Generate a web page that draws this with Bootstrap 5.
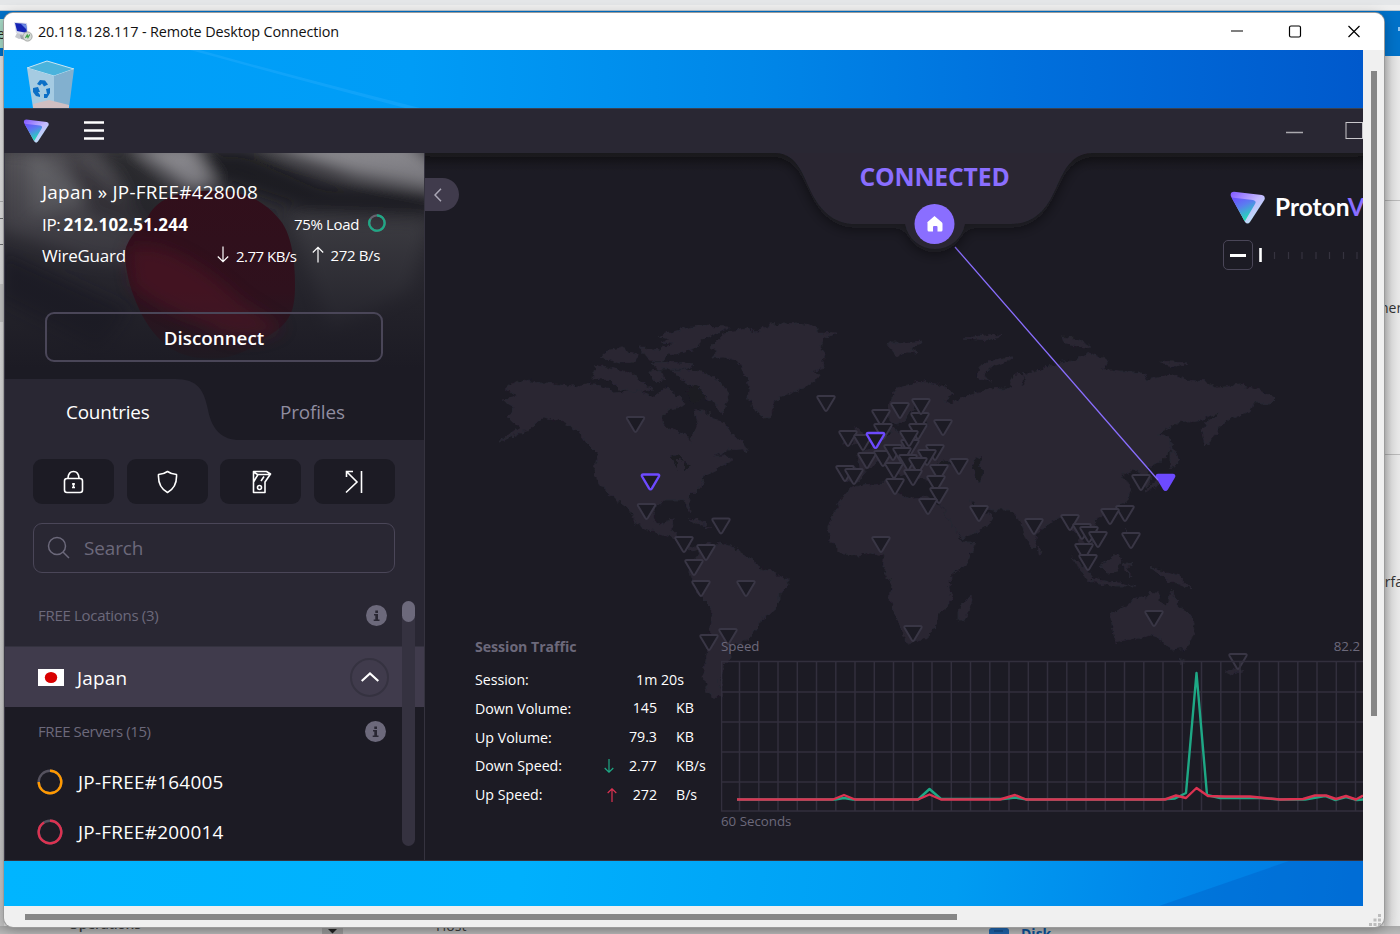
<!DOCTYPE html>
<html lang="en">
<head>
<meta charset="utf-8">
<title>Remote Desktop Connection</title>
<link href="https://cdn.jsdelivr.net/npm/bootstrap@5.3.0/dist/css/bootstrap.min.css" rel="stylesheet">
<style>
:root{--panel:#292733;--deep:#1c1b24;--edge:#35333f;--mute:#6c697b;--violet:#8a6eff}
body{width:1400px;height:934px;overflow:hidden;font-family:"Open Sans","Noto Sans",sans-serif;line-height:1;background:#dcdcdc}
.t{white-space:nowrap;display:block}
svg{display:block}
/* page behind the window */
.back{width:1400px;height:934px}
.strip{height:11px;background:linear-gradient(#e4e6e8 0 5px,#efefef 5px 10px,#b9c4cc 10px)}
.azure{height:45px;background:#0072c9}
.azure .chip{width:5px;height:29px;margin-top:8px;background:#a9dcc8;font-size:14px;color:#222}
.azure .chip .t{margin-left:-3px}
.side-l{width:4px;background:linear-gradient(#e6e6e6,#d9d9d9 50%,#c4c4c4)}
.side-r{width:16px;background:linear-gradient(90deg,#c4c4c4,#e0e0e0 50%,#e9e9e9);font-size:14px;color:#333}
.foot{height:8px;background:linear-gradient(#a9a9a9,#b9b9b9);overflow:hidden;font-size:14px;color:#3c3c3c}
/* remote desktop window */
.win{left:4px;top:13px;width:1380px;height:914px;border-radius:9px;background:#f0f0f0;box-shadow:0 0 0 1px #9b9b9b,0 3px 14px rgba(0,0,0,.3)}
.bar{height:37px;background:#fff}
.bar .t{font-size:14.4px;letter-spacing:-.11px;color:#111;padding-top:1px}
.desk{width:1359px;height:856px;overflow:hidden;background:linear-gradient(90deg,#00a2fb 0,#009cf6 30%,#0087e8 55%,#006fdc 76%,#0059cc 100%)}
.desk-top{height:58px}
.desk-bot{height:45px;background:linear-gradient(97deg,#00b5ff 0,#00b0fd 38%,#009cf2 70%,#0088ea 84%,#0078e0 100%)}
.vbar{width:21px;padding:21px 0 0 8px}.vbar i{display:block;width:6px;height:645px;background:#868686}
.hbar{height:21px;padding:8px 0 0 21px}.hbar i{display:block;width:932px;height:6px;background:#868686}
/* vpn application */
.app{height:753px;background:var(--deep);color:#fff;border-top:1px solid #3a4252;border-bottom:1px solid #34323f}
.app-head{height:44px;background:var(--panel)}
.aside{width:421px;border-right:1px solid var(--edge);background:var(--panel);border-left:1px solid #3a3846}
.hero{height:226px;overflow:hidden}
.hero-in{padding:30px 42px 0 37px}
.f20{font-size:18.9px}.f18{font-size:17px}.f16{font-size:15px}
.srv{letter-spacing:.26px}
.btn-x{height:50px;margin-left:3px;width:338px;border:2px solid #4a4658;border-radius:9px;color:#fff;background:transparent;font-size:18.8px;font-weight:600;padding:3px 0 0}
.tabs{height:61px}
.tool{width:81px;height:45px;border-radius:9px;background:var(--deep)}
.find{height:50px;border:1px solid #4a4658;border-radius:9px;margin:19px 29px 0 28px;padding-left:13px;color:var(--mute)}
.loc{height:60px;background:#403b4c}
.inf{width:21px;height:21px;border-radius:50%;background:#6c697b}
.up{width:39px;height:39px;border-radius:50%;border:2px solid #353240}
.track{right:9px;top:448px;width:13px;height:245px;border-radius:7px;background:#353240}
.track i{display:block;height:21px;border-radius:7px;background:#6c697b}
.stage{width:938px}
.fold{left:0;top:25px;width:34px;height:33px;border-radius:0 17px 17px 0;background:#403b4c}
.status{left:434px;top:12px;width:151px;font-size:24.7px;font-weight:700;color:var(--violet);letter-spacing:-.15px}
.brand{left:805px;top:38px}
.brand .t{font-family:"Lato",sans-serif;font-weight:700;font-size:24.5px;letter-spacing:0}
.zoomer{left:798px;top:87px}
.zoomer b{width:30px;height:30px;border:1px solid #4a4658;border-radius:5px}
.stats{left:50px;top:484px;width:240px;font-size:14.2px}
.stats .r{height:28.8px}
.chart{left:296px;top:487px;width:642px;font-size:13.3px;color:var(--mute)}
</style>
</head>
<body>
<div class="back d-flex flex-column">
  <div class="strip"></div>
  <div class="azure d-flex justify-content-between"><div class="chip d-flex align-items-center"><span class="t">e</span></div><svg width="2" height="45"><path d="M0 16h2v4H0z" fill="#8fc3ee"/></svg></div>
  <div class="flex-grow-1 d-flex justify-content-between">
    <div class="side-l d-flex flex-column">
      <hr class="m-0" style="margin-top:145px!important"><hr class="m-0" style="margin-top:16px!important;opacity:.6"><hr class="m-0" style="margin-top:25px!important;opacity:.6">
      <svg width="4" height="77"><path d="M0 39h4v38H0z" fill="#c6c6c6"/></svg>
    </div>
    <div class="side-r">
      <hr class="m-0" style="margin-top:144px!important">
      <span class="t" style="margin:100px 0 0 -4px">ner</span>
      <hr class="m-0" style="margin-top:139px!important">
      <span class="t" style="margin:120px 0 0 -7px">erfa</span>
    </div>
  </div>
  <div class="foot d-flex">
    <span class="t fw-semibold" style="margin:-9px 0 0 68px;width:368px;letter-spacing:-.3px">Operations</span>
    <span class="t" style="margin:-7px 0 0;width:553px">Host</span>
    <svg width="20" height="8"><path d="M0 4Q0 1 10 1T20 4V8H0z" fill="#1f62a8"/><path d="M5 5h9" stroke="#0c3d74"/></svg>
    <span class="t fw-bold" style="margin:1px 0 0 12px;color:#0a4f96">Disk</span>
  </div>
</div>
<svg class="position-absolute" style="left:322px;top:927px" width="21" height="7"><path d="M0 0h21v7H0z" fill="#999"/><path d="M6 2h9l-4.500 4.500z" fill="#222"/></svg>

<main class="win position-absolute overflow-hidden">
  <header class="bar d-flex align-items-center">
    <svg class="ms-2" width="22" height="22" viewBox="0 0 22 22"><path d="M2 1l13 1 1 12-12-2z" fill="#d7dcec"/><path d="M3 2l11 1 1 9-10-2z" fill="#1524b4"/><path d="M9 3l5 .3L15 9z" fill="#6d8be4"/><path d="M5 12l5 1 4 3-7 2-4-2z" fill="#c5c8ce"/><path d="M8 14l4 1 1 4-4-1z" fill="#9ea2ab"/><circle cx="15.500" cy="15.500" r="4.600" fill="#d6d9d6" stroke="#a5a8a5"/><path d="M13.500 17l1.700-3 .8 2.500 1.700-3" stroke="#3fa34b" fill="none" stroke-width="1.200"/></svg>
    <span class="t" style="margin-left:4px">20.118.128.117 - Remote Desktop Connection</span>
    <svg class="ms-auto" style="margin-right:23px" width="130" height="14" viewBox="0 0 130 14" fill="none" stroke="#000" stroke-width="1.200"><path d="M0 6h12M117.500 1l11 11M128.500 1l-11 11"/><rect x="58.500" y="1" width="11" height="11" rx="1.500"/></svg>
  </header>
  <div class="d-flex">
    <div class="desk d-flex flex-column">
      <div class="desk-top">
        <svg width="1359" height="58" viewBox="4 50 1359 58"><path d="M200 50Q300 78 420 108H405Q300 80 190 50z" fill="#34b4ff" opacity=".3"/>
          <path d="M27 68l20-7 27 8-20 7z" fill="#4ab3dc" stroke="#c9e6f3"/><path d="M27 68l27 8v32H33z" fill="#a5cbe2"/><path d="M54 76l20-7-5 39H54z" fill="#82b0cf"/><path d="M33 104l16-4 20 5v3H33z" fill="#d0bfc2"/>
          <g fill="#0c6fc6"><path d="M37 84l3-4 5 .5 3 4-4 2-2-3-2 2zM46 89l4-1 0 5-3 5-3 0 0-4 3 0zM33 88l5-1 2 5-2 0 2 3 0 2-4-1-3-4z"/></g></svg>
      </div>
      <section class="app">
        <div class="app-head d-flex align-items-center">
          <svg style="margin-left:19px" width="27" height="24" viewBox="0 0 36 33"><use href="#logo"/></svg>
          <svg style="margin:-2px 0 0 34px" width="20" height="19" viewBox="0 0 20 19"><path d="M0 1.500h20M0 9.500h20M0 17.500h20" stroke="#fff" stroke-width="2.400"/></svg>
          <svg class="ms-auto" width="78" height="18" viewBox="1285 122 78 18"><path d="M1286 132.500h17" stroke="#aaa9ae" stroke-width="1.500"/><rect x="1346" y="122.500" width="16.500" height="16" fill="none" stroke="#c9c8cc"/></svg>
        </div>
        <div class="d-flex" style="height:707px">
          <aside class="aside position-relative overflow-hidden">
            <div class="hero position-relative">
              <svg class="position-absolute top-0 start-0" width="419" height="226" viewBox="5 153 419 226">
                <defs><linearGradient id="hg" x1="0" y1="0" x2="0" y2="1"><stop offset="0" stop-color="#1c1b24" stop-opacity="0"/><stop offset=".45" stop-color="#1c1b24" stop-opacity=".5"/><stop offset=".95" stop-color="#1c1b24"/></linearGradient>
                <linearGradient id="rd" x1="0" y1="0" x2="0" y2="1"><stop offset="0" stop-color="#310f1b"/><stop offset=".6" stop-color="#2f111d"/><stop offset="1" stop-color="#1f1a22"/></linearGradient>
                <filter id="b1" x="-30%" y="-50%" width="160%" height="200%"><feGaussianBlur stdDeviation="8"/></filter></defs>
                <path d="M5 153h419v226H5z" fill="#36353a"/>
                <g filter="url(#b1)"><path d="M0 150h90l60 60 10 60-70-10-90-30z" fill="#545358"/><path d="M30 150l60 50-60 20z" fill="#68676c"/><path d="M60 140l60 56 60 30-10 20-80-30z" fill="#3a393e"/><path d="M100 150h30l40 40 10 80-40-50z" fill="#2a292e"/><path d="M130 145h60l40 36-40 10z" fill="#8a898e"/><path d="M195 150l50 0 80 34 110 6v26l-130-4-90-30z" fill="#1d1c21"/><path d="M255 140h150l40 30v22l-90-16-60-20z" fill="#88878c"/><path d="M290 216l140 5-20 70-80 40z" fill="#4c4b50"/><path d="M0 250l130 60-30 40L0 300z" fill="#1f1e25"/></g>
                <path d="M5 153h419v226H5z" fill="url(#hg)"/>
                <path d="M150 213C165 190 200 190 222 191C250 192 268 205 280 220C290 232 295 255 295 285C295 310 291 322 270 335C250 350 230 362 200 358C160 355 140 318 130 285C124 262 124 250 127 245C132 232 144 225 150 213z" fill="url(#rd)"/>
                <path d="M128 248Q170 235 240 300L284 328Q240 350 205 325Q160 310 132 285z" fill="#551528" opacity=".5" filter="url(#b1)"/></svg>
              <div class="hero-in position-relative">
                <span class="t f20 srv">Japan » JP-FREE#428008</span>
                <div class="d-flex align-items-center" style="margin-top:14px;height:17px"><span class="t f18" style="letter-spacing:-.3px">IP:</span><span class="t f18 fw-bold" style="margin-left:3px;letter-spacing:.22px">212.102.51.244</span><span class="t f16 ms-auto" style="letter-spacing:-.35px">75% Load</span>
                  <svg style="margin:-2px -4px 0 9px" width="18" height="18" viewBox="0 0 18 18" fill="none" stroke-width="2.200"><circle cx="9" cy="9" r="7.700" stroke="#66636f"/><path d="M9 1.300A7.700 7.700 0 1 1 2.300 5" stroke="#1ea885"/></svg></div>
                <div class="d-flex align-items-center" style="margin-top:14px;height:18px"><span class="t f18" style="letter-spacing:-.25px">WireGuard</span>
                  <svg class="ms-auto" style="margin-top:-2px" width="12" height="17" viewBox="0 0 12 17" fill="none" stroke="#fff" stroke-width="1.200"><path d="M6 .5v15M.8 10.500L6 15.700l5.200-5.200"/></svg><span class="t f16" style="margin-left:7px;letter-spacing:-.5px;padding-top:1px">2.77 KB/s</span>
                  <svg style="margin:-2px 0 0 16px" width="12" height="17" viewBox="0 0 12 17" fill="none" stroke="#fff" stroke-width="1.200"><path d="M6 16.500v-15M.8 6.500L6 1.300l5.200 5.200"/></svg><span class="t f16" style="margin-left:6px;margin-right:2px;letter-spacing:-.35px">272 B/s</span></div>
                <button class="btn-x" style="margin-top:47px">Disconnect</button>
              </div>
            </div>
            <div class="tabs position-relative">
              <svg class="position-absolute top-0 start-0" width="419" height="61" viewBox="5 379 419 61"><path d="M175 379C198 379 204 390 208 410C212 430 222 440 240 440H424V379z" fill="#1c1b24"/></svg>
              <div class="position-relative d-flex f20"><span class="t" style="margin:24px 0 0 61px;width:214px;letter-spacing:-.2px">Countries</span><span class="t" style="margin-top:24px;color:#908da0;letter-spacing:-.15px">Profiles</span></div>
            </div>
            <div class="d-flex" style="margin:19px 28px 0;gap:12.670px">
              <div class="tool d-flex align-items-center justify-content-center"><svg width="21" height="24" viewBox="0 0 21 24" fill="none" stroke="#fff" stroke-width="1.600"><rect x="1.500" y="8.500" width="18" height="14" rx="2.500"/><path d="M5 8Q5.500 1.500 10.500 1.500T16 8"/><path d="M10.500 13v5M9 14h3M9 17.500h3"/></svg></div>
              <div class="tool d-flex align-items-center justify-content-center"><svg width="21" height="24" viewBox="0 0 21 24" fill="none" stroke="#fff" stroke-width="1.600" stroke-linejoin="round"><path d="M10.500 1.500Q14 4 19.500 4.500C20 13 17 19 10.500 22.500C4 19 1 13 1.500 4.500Q7 4 10.500 1.500z"/></svg></div>
              <div class="tool d-flex align-items-center justify-content-center"><svg style="margin-left:4px" width="21" height="24" viewBox="0 0 21 24" fill="none" stroke="#fff" stroke-width="1.600" stroke-linejoin="round"><path d="M1.500 1.500h13l4 2.500-5.500 8v10.500H1.500zM1.500 2l4 2.500h13M1.500 12l4.500-7.500M9 11l3-4.500"/><circle cx="7.500" cy="17.500" r="2"/></svg></div>
              <div class="tool d-flex align-items-center justify-content-center"><svg width="18" height="24" viewBox="0 0 18 24" fill="none" stroke="#fff" stroke-width="1.600"><path d="M16.500 1v22M1 22.500L12 12 1.500 1.500M1.500 7V1.500H8"/></svg></div>
            </div>
            <div class="find d-flex align-items-center"><svg style="margin-top:-2px" width="23" height="23" viewBox="0 0 23 23" fill="none" stroke="#6c697b" stroke-width="1.500"><circle cx="10" cy="10" r="8.500"/><path d="M16 16l6 6"/></svg><span class="t f20" style="margin-left:14px;padding-top:1px;letter-spacing:-.1px">Search</span></div>
            <div class="d-flex align-items-center" style="height:74px;padding:11px 37px 0 33px;border-bottom:1px solid #34323f"><span class="t f16" style="color:#6c697b;letter-spacing:-.3px">FREE Locations (3)</span><div class="inf ms-auto"><svg width="21" height="21"><use href="#info"/></svg></div></div>
            <div class="loc d-flex align-items-center"><svg style="margin-left:33px" width="26" height="17"><path d="M0 0h26v17H0z" fill="#fff"/><ellipse cx="13" cy="8.500" rx="6.200" ry="5.500" fill="#d80000"/></svg><span class="t f20" style="margin-left:13px;padding-top:2px;letter-spacing:.2px">Japan</span><div class="up ms-auto d-flex align-items-center justify-content-center" style="margin-right:35px"><svg width="18" height="10" fill="none" stroke="#fff" stroke-width="2.200"><path d="M.7 9L9 1.500 17.300 9"/></svg></div></div>
            <div style="height:154px;background:#1c1b24">
              <div class="d-flex align-items-center" style="height:50px;padding:0 38px 1px 33px"><span class="t f16" style="color:#6c697b;letter-spacing:-.4px">FREE Servers (15)</span><div class="inf ms-auto"><svg width="21" height="21"><use href="#info"/></svg></div></div>
              <div class="d-flex align-items-center" style="height:50px;padding-left:31.500px"><svg width="26" height="26" fill="none" stroke-width="2.400"><circle cx="13" cy="13" r="11.300" stroke="#55525f"/><path d="M13 1.700A11.300 11.300 0 1 1 1.700 13" stroke="#ff9900"/></svg><span class="t f20 srv" style="margin-left:15.500px">JP-FREE#164005</span></div>
              <div class="d-flex align-items-center" style="height:50px;padding-left:31.500px"><svg width="26" height="26" fill="none" stroke-width="2.400"><circle cx="13" cy="13" r="11.300" stroke="#55525f"/><path d="M13 1.700A11.300 11.300 0 1 1 7 3.400" stroke="#dc3251"/></svg><span class="t f20 srv" style="margin-left:15.500px">JP-FREE#200014</span></div>
            </div>
            <div class="track position-absolute"><i></i></div>
          </aside>

          <section class="stage position-relative overflow-hidden">
            <svg class="position-absolute top-0 start-0" width="938" height="707" viewBox="425 153 938 707">
              <defs>
                <linearGradient id="lg1" x1="0" y1="0" x2=".5" y2="1"><stop offset="0" stop-color="#6d4aff"/><stop offset=".45" stop-color="#5b7cf0"/><stop offset="1" stop-color="#1fe0b4"/></linearGradient>
                <linearGradient id="lg2" x1="0" y1="0" x2="1" y2="1"><stop offset="0" stop-color="#8158ff"/><stop offset=".5" stop-color="#c3b8ff"/><stop offset="1" stop-color="#b8fff0"/></linearGradient>
                <g id="logo"><path d="M4 .8L32 4Q36 5 34.300 9L20 31Q17.500 34 15 31L.8 5Q0 1 4 .8z" fill="url(#lg2)"/><path d="M1.500 6.500L23 9Q27 10 25 13L15 30Q14 30 13.500 28z" fill="url(#lg1)"/></g>
                <g id="info"><path d="M9.300 5.500h2.700v2.400H9.300zM8 9h4v5.500h1.500V16H7.700v-1.500h1.600v-4H8z" fill="#292733"/></g>
                <path id="pin" d="M-7.200-7h14.400q2.200 0 1.200 2L1.400 6.800Q0 9-1.400 6.800L-8.400-5Q-9.400-7-7.200-7z"/>
                <linearGradient id="shade" x1="0" y1="0" x2="0" y2="1"><stop offset="0" stop-color="#18171c"/><stop offset="1" stop-color="#1c1b24"/></linearGradient>
                <filter id="ds" x="-20%" y="-20%" width="140%" height="160%"><feDropShadow dx="0" dy="4" stdDeviation="7" flood-color="#121117" flood-opacity=".55"/></filter>
                <filter id="coast" x="-2%" y="-2%" width="104%" height="104%"><feTurbulence type="fractalNoise" baseFrequency=".16" numOctaves="3" seed="4"/><feDisplacementMap in="SourceGraphic" scale="7" xChannelSelector="R" yChannelSelector="G"/></filter>
              </defs>
              <path d="M425 153h938v18H425z" fill="url(#shade)"/>
              <g filter="url(#coast)">
              <g fill="#292733" stroke="#292733" stroke-width=".8" stroke-linejoin="round">
                <path d="M505 390L511 385 523 380 537 383 550 383 573 387 590 383 601 386 613 392 628 391 640 392 653 397 667 387 672 393 680 397 684 404 680 407 670 409 662 415 661 421 667 428 679 431 687 435 690 443 693 435 698 423 695 412 701 411 710 413 714 420 725 423 728 430 733 437 743 443 749 452 742 449 727 450 713 457 725 455 733 460 718 467 707 473 703 480 700 487 693 493 688 498 691 512 686 505 685 500 667 500 655 507 653 514 655 522 665 525 669 519 674 518 672 529 676 536 684 540 693 548 701 545 700 549 692 552 680 542 667 535 647 530 635 522 630 510 613 497 602 487 596 478 595 470 597 453 588 444 580 433 563 422 543 417 530 428 500 442 498 442 520 428 507 417 515 408 503 400 517 395z"/>
                <path d="M710 347L718 340 723 335 732 331 747 329 756 332 770 325 797 323 806 324 817 328 817 332 838 333 824 338 823 342 821 349 825 354 823 360 824 368 813 371 819 375 817 380 806 386 793 392 775 400 772 410 770 418 765 418 757 413 751 404 748 397 750 385 745 375 737 360 723 357 713 358 717 352z"/>
                <path d="M658 337l18-6 22-5 32 1-12 6-15 6-8 9-18 6-22-2 8-5 12-3-14-2 10-3zM600 358l10-8 14-3 3 5 12 2-4 8-16 1-8-3zM595 368l8-2 17 4 12 3 8 7 14 10-18 2-18-4-8-8-17-2zM640 348l15 1 12 5-4 7-14-2zM650 362l10 0 24 1 10 2-8 4-28 0zM648 371l12-1 5 8-8 6zM672 370l14 0 20 4 14 8 10 13-8 18-10-12-7-3-10-12-14-6z"/>
                <path d="M688 519l10 1 9 5-7-1-8-3zM706 526l6 1-4 1z"/>
                <path d="M707 543L713 545 720 543 730 546 740 552 753 560 757 568 773 572 788 580 788 585 780 593 780 600 778 607 769 615 760 620 757 628 753 633 749 639 740 643 733 645 730 650 731 657 723 667 720 687 717 680 722 697 712 696 707 692 703 673 706 660 708 647 712 607 700 595 690 577 689 572 693 562 698 556 698 550z"/>
                <path d="M843 497L852 487 863 485 893 482 897 493 910 498 923 497 940 505 947 517 957 533 962 542 975 542 973 549 967 563 957 571 950 577 949 588 952 600 946 607 938 613 937 623 930 634 923 640 907 643 903 633 899 623 895 613 890 600 892 583 886 575 883 567 884 560 883 555 870 552 858 555 843 554 835 547 830 540 828 527 832 516z"/>
                <path d="M971 593L972 600 965 620 958 620 958 612 960 605 967 601z"/>
                <path d="M890 400L893 393 897 388 911 384 923 381 936 383 947 388 955 395 948 398 943 400 951 404 960 399 970 395 987 390 1000 388 1012 388 1010 378 1018 373 1023 378 1020 388 1026 384 1023 374 1040 370 1063 362 1074 361 1088 353 1100 357 1108 360 1105 367 1100 370 1120 372 1143 372 1147 380 1158 378 1170 375 1187 380 1207 382 1217 388 1240 385 1260 390 1275 398 1270 403 1253 403 1250 412 1230 418 1218 427 1217 433 1205 446 1202 433 1207 423 1220 413 1210 415 1200 420 1177 422 1158 435 1170 437 1172 443 1170 450 1160 463 1147 467 1151 478 1147 487 1141 483 1140 474 1133 470 1122 475 1128 483 1130 491 1128 500 1113 510 1100 517 1093 520 1100 533 1093 543 1083 533 1082 538 1088 555 1080 547 1078 535 1070 527 1063 517 1050 522 1037 533 1035 545 1032 548 1025 537 1023 527 1010 510 993 510 980 509 970 500 977 515 985 513 993 517 987 527 962 538 953 527 940 503 938 492 940 482 917 477 910 482 907 476 895 473 880 460 870 467 857 482 843 480 840 468 860 467 858 455 873 447 883 440 890 433 890 426 900 433 912 433 925 431 928 422 919 418 927 408 917 403 912 411 905 420 898 424 890 420 888 411z"/>
                <path d="M888 343l14 0 20-2-4 5-7 3 6 4-10-1-10 4-5-6zM978 371q2-10 34-14l-1 3q-26 6-26 16l6 4-14-2zM963 338l20-2 20-1-14 5zM1062 337l16 2 12 8-6 1-20-5zM1160 361l28 2-12 3-14-2z"/>
                <path d="M855 425l6 6 3 9-10 4 2-8zM843 437l7-2 1 8-8 2zM1171 437l3 16 5 7-7 9-1-9zM1163 475l-12 10-6 6 10-4 12-6zM1100 566l17-13 5 6-5 12-10 2zM1071 556l14 12 9 13-7-1zM1092 579l20 3 24 4-20 0-22-4zM1124 564l8 0-4 5 3 8-6-6zM1150 567l14 4 15 5 12 12-12-5-12-1-8-8zM1127 528l5 11-2 8zM1038 545l4 7-3 1z"/>
                <path d="M1110 613L1119 609 1130 605 1134 600 1140 597 1146 598 1150 592 1158 593 1157 600 1167 606 1172 590 1175 598 1180 607 1188 613 1193 620 1195 630 1187 648 1173 650 1166 646 1160 638 1151 635 1143 637 1131 640 1115 643 1113 630zM1178 660l7 0-3 5zM1238 668l-12 4 4 3 12-4z"/>
              </g>
              <g fill="#1c1b24"><path d="M976 459l5-3-1 8 2 10-2 9-5-8-3-9zM671 457l8-3 4 8-6-3 0 11-3-8zM684 462l6 5-6 4zM688 387l10-2 8 12-12 6-8-8z"/><path d="M946 461l8 3-16 3-6-3z"/></g>
              </g>
              <g id="pins" stroke="#393645" stroke-width="2" fill="#1c1b24"></g>
              <g stroke="#6d4aff" stroke-width="2.400" fill="#1c1b24"><use href="#pin" x="650.500" y="481.500"/><use href="#pin" x="875.500" y="440"/><use href="#pin" x="1165.500" y="482" fill="#6d4aff"/></g>
              <path d="M955 247L1158 480" stroke="#8a6eff" stroke-width="1.300"/>
              <path d="M415 140H1373V153H1093C1065 153 1061 182 1050 200C1040 217 1027 224 1010 224H965A30.500 30.500 0 0 1 905 224H855C837 224 824 214 815 199C804 181 800 153 775 153H415z" fill="#292733" filter="url(#ds)"/>
              <circle cx="934.500" cy="224" r="20" fill="#8a6eff"/><path d="M927 222.500l7.500-6.500 7.500 6.500q.5.500.5 1.500v6q0 1.500-1.500 1.500h-3.500V227q0-1-1-1h-2.500q-1 0-1 1v4.500h-4q-1.500 0-1.500-1.500v-6q0-1 0-1.500z" fill="#fff"/>
            </svg>
            <div class="fold position-absolute d-flex align-items-center"><svg style="margin-left:9px" width="8" height="14" fill="none" stroke="#aaa7b5" stroke-width="1.500"><path d="M7 .8L1 7l6 6.200"/></svg></div>
            <span class="status position-absolute t text-center">CONNECTED</span>
            <div class="brand position-absolute d-flex align-items-center"><svg width="36" height="33" viewBox="0 0 36 33"><use href="#logo"/></svg><span class="t" style="margin-left:9px">Proton<span style="color:#8a6eff">VPN</span></span></div>
            <div class="zoomer position-absolute d-flex align-items-center"><b class="d-flex align-items-center justify-content-center"><svg width="16" height="3"><path d="M0 0h16v3H0z" fill="#fff"/></svg></b>
              <svg style="margin-left:6px" width="104" height="14"><path d="M1.500 0v14" stroke="#fff" stroke-width="2.600"/><path d="M15.500 4v7M29.500 4v7M43 4v7M57 4v7M70.500 4v7M84.500 4v7M98 4v7" stroke="#35333f" stroke-width="1.200"/></svg></div>
            <div class="stats position-absolute">
              <span class="t fw-bold" style="color:#6c697b;margin-top:3px;margin-bottom:11px;letter-spacing:-.05px">Session Traffic</span>
              <div class="r d-flex align-items-center"><span class="t">Session:</span><span class="t ms-auto" style="margin-right:31px">1m 20s</span></div>
              <div class="r d-flex align-items-center"><span class="t pt-1" style="margin-top:-2px">Down Volume:</span><span class="t ms-auto">145</span><span class="t" style="width:39px;margin-left:19px">KB</span></div>
              <div class="r d-flex align-items-center"><span class="t pt-1" style="margin-top:-2px">Up Volume:</span><span class="t ms-auto">79.3</span><span class="t" style="width:39px;margin-left:19px">KB</span></div>
              <div class="r d-flex align-items-center"><span class="t">Down Speed:</span><svg class="ms-auto" width="10" height="14" fill="none" stroke="#1ea885" stroke-width="1.200"><path d="M5 0v13M.7 9L5 13.200 9.300 9"/></svg><span class="t text-end" style="width:43px">2.77</span><span class="t" style="width:39px;margin-left:19px">KB/s</span></div>
              <div class="r d-flex align-items-center"><span class="t">Up Speed:</span><svg class="ms-auto" width="10" height="14" fill="none" stroke="#dc3251" stroke-width="1.200"><path d="M5 14V1M.7 5L5 .8 9.300 5"/></svg><span class="t text-end" style="width:40px">272</span><span class="t" style="width:39px;margin-left:19px">B/s</span></div>
            </div>
            <div class="chart position-absolute">
              <div class="d-flex justify-content-between"><span class="t">Speed</span><span class="t" style="margin-right:3px">82.2</span></div>
              <svg style="margin-top:7px" width="642" height="152" viewBox="721 660 642 152" fill="none" stroke-width="2.400" stroke-linejoin="round">
                <path id="grid" stroke="#322f3d" stroke-width="1.500"/>
                <path d="M737 799.500H835L844 798 853 799.500H918L929.500 789 941 799H1003L1015 797.500 1027 799.500H1160L1175 798.500 1186 793 1196.500 673 1207 795 1220 798H1260L1280 799.500 1305 799.500 1325 796 1335 800 1346 797 1357 800 1363 799.500" stroke="#1ea885"/>
                <path d="M737 799.500H833L844 795 855 799.500H918L929.500 794.500 941 799.500H1000L1015 795 1026 799.500H1165L1176 795.500 1186 798 1196.500 788 1208 796 1225 796.500H1250L1280 799.500 1303 799 1315 795.500H1326L1336 799 1346 796 1356 799.500 1363 795.500" stroke="#dc3251"/>
              </svg>
              <span class="t" style="margin-top:3px">60 Seconds</span>
            </div>
          </section>
        </div>
      </section>
      <div class="desk-bot"><svg class="ms-auto" width="209" height="45"><path d="M5 45L60 26 135 0H209V45z" fill="#0058c4" opacity=".35"/></svg></div>
    </div>
    <div class="vbar"><i></i></div>
  </div>
  <div class="hbar d-flex justify-content-between"><i></i><svg style="margin-right:3px" width="12" height="12" fill="#bdbdbd"><path d="M9 0h3v3H9zM4.500 4.500h3v3h-3zM9 4.500h3v3H9zM0 9h3v3H0zM4.500 9h3v3h-3zM9 9h3v3H9z"/></svg></div>
</main>
<script src="https://cdn.jsdelivr.net/npm/bootstrap@5.3.0/dist/js/bootstrap.bundle.min.js"></script>
<script>
// server locations on the map
const pins=[[635.5,424],[826,403],[646.5,511],[721,525.5],[684,544],[706,552],[694,567],[701,588],[746,588],[728,636],[709,642],[881,544],[913,633],
[881,417],[900,410],[920,420],[921,406],[883,431],[918,431],[943,427],[848,438],[863,442],[910,447],[909,438],[867,460],[845,473],[854,476],[883,458],[893,452],[902,455],[894,470],[908,462],[935,452],[927,457],[918,465],[913,477],[895,486],[939,472],[959,466],[936,483],[939,495],[928,506],[979,513],[1034,526],[1070,522],[1082,531],[1089,534],[1098,539],[1084,551],[1088,562],[1125,513],[1110,516],[1131,540],[1141,482],[1154,618],[1238,661]];
document.getElementById('pins').innerHTML=pins.map(p=>`<use href="#pin" x="${p[0]}" y="${p[1]}"/>`).join('');
let d='M721.500 661.500V811';
for(let i=0;i<33;i++)d+=`M${(739.5+i*19.25).toFixed(1)} 661.500V811`;
for(const y of [661.5,692,722,752,782,811])d+=`M721 ${y}H1363`;
document.getElementById('grid').setAttribute('d',d);
</script>
</body>
</html>
